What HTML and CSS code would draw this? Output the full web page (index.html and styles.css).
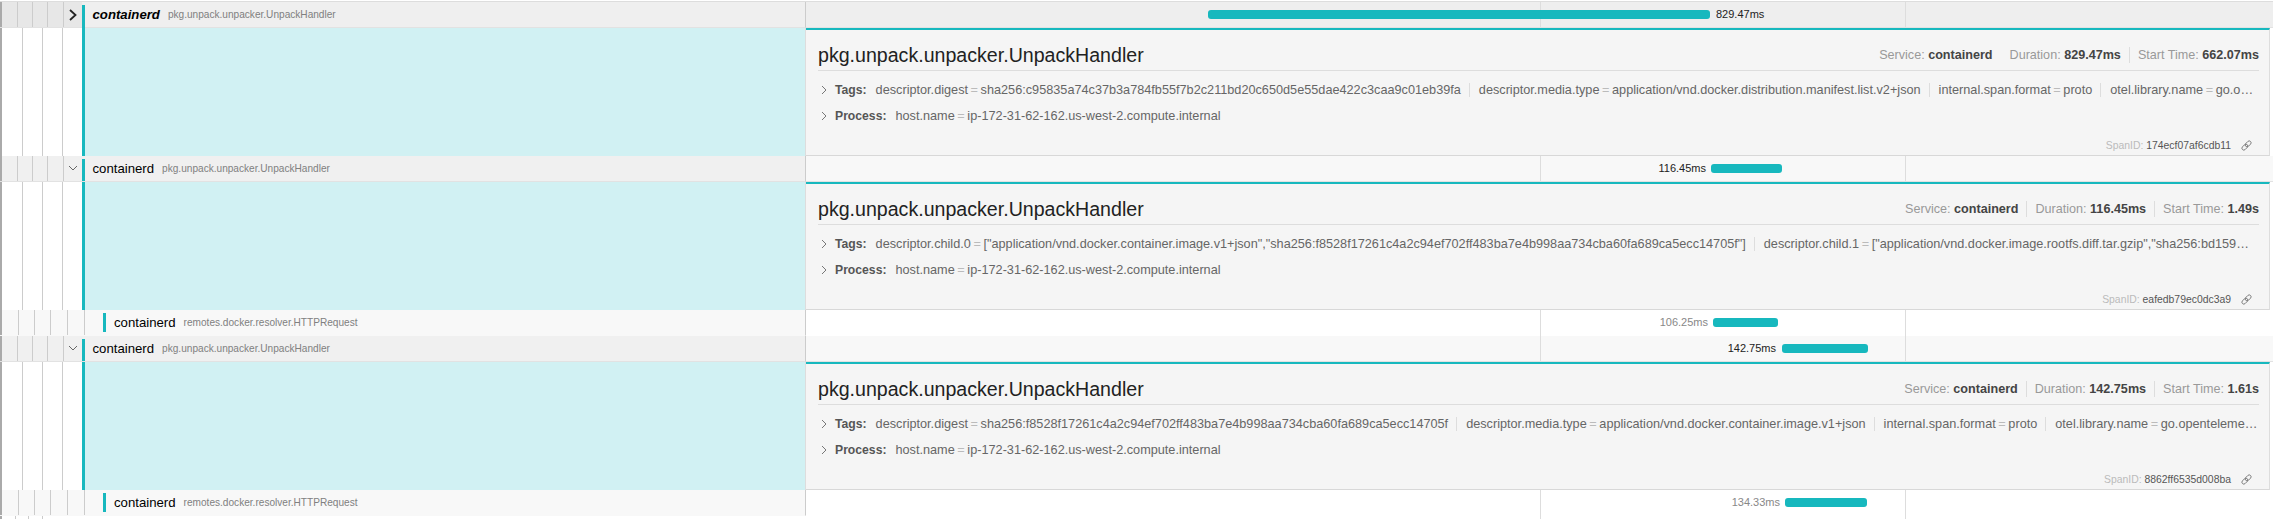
FILE: index.html
```html
<!DOCTYPE html>
<html lang="en">
<head>
<meta charset="utf-8">
<title>Trace timeline</title>
<link rel="stylesheet" href="styles.css">
</head>
<body>
<div class="trace">
  <div class="row row-open row-first">
    <div class="name">
      <div class="guides"><i></i><i></i><i></i><i></i></div>
      <span class="toggle"><svg width="10" height="12" viewBox="0 0 10 12"><path d="M2 1l5.5 5L2 11" fill="none" stroke="#222" stroke-width="1.8"/></svg></span>
      <div class="label"><b class="svc svc-em">containerd</b><span class="op">pkg.unpack.unpacker.UnpackHandler</span></div>
    </div>
    <div class="timeline"><i class="tick t1"></i><i class="tick t2"></i><div class="bar" style="left:402px;width:502px"></div><span class="dur" style="left:910px">829.47ms</span></div>
  </div>
  <div class="detail-row">
    <div class="fill"><div class="guides"><i></i><i></i><i></i><i></i></div><div class="tint"></div></div>
    <div class="detail">
      <div class="head"><h2>pkg.unpack.unpacker.UnpackHandler</h2><div class="meta"><span class="m m-nosep">Service: <b>containerd</b></span><span class="m">Duration: <b>829.47ms</b></span><span class="m">Start Time: <b>662.07ms</b></span></div></div>
      <div class="kv"><svg class="chev" width="6" height="10" viewBox="0 0 6 10"><path d="M1 1l4 4-4 4" fill="none" stroke="#777"/></svg><b>Tags:</b><div class="pairs"><span class="p">descriptor.digest<s>=</s>sha256:c95835a74c37b3a784fb55f7b2c211bd20c650d5e55dae422c3caa9c01eb39fa</span><span class="p">descriptor.media.type<s>=</s>application/vnd.docker.distribution.manifest.list.v2+json</span><span class="p">internal.span.format<s>=</s>proto</span><span class="p">otel.library.name<s>=</s>go.o…</span></div></div>
      <div class="kv"><svg class="chev" width="6" height="10" viewBox="0 0 6 10"><path d="M1 1l4 4-4 4" fill="none" stroke="#777"/></svg><b>Process:</b><div class="pairs"><span class="p">host.name<s>=</s>ip-172-31-62-162.us-west-2.compute.internal</span></div></div>
      <div class="span-id">SpanID: <em>174ecf07af6cdb11</em><svg width="13" height="13" viewBox="0 0 13 13"><g transform="rotate(-45 6.5 6.5)" fill="none" stroke="#777" stroke-width=".9"><rect x=".8" y="4.6" width="6.8" height="3.8" rx="1.9"/><rect x="5.4" y="4.6" width="6.8" height="3.8" rx="1.9"/></g></svg></div>
    </div>
  </div>

  <div class="row">
    <div class="name">
      <div class="guides"><i></i><i></i><i></i><i></i></div>
      <span class="toggle"><svg width="10" height="7" viewBox="0 0 10 7"><path d="M1 1l4 4 4-4" fill="none" stroke="#666" stroke-width="1"/></svg></span>
      <div class="label"><span class="svc">containerd</span><span class="op">pkg.unpack.unpacker.UnpackHandler</span></div>
    </div>
    <div class="timeline"><i class="tick t1"></i><i class="tick t2"></i><span class="dur dur-l" style="right:567px">116.45ms</span><div class="bar" style="left:905px;width:71px"></div></div>
  </div>
  <div class="detail-row">
    <div class="fill"><div class="guides"><i></i><i></i><i></i><i></i></div><div class="tint"></div></div>
    <div class="detail">
      <div class="head"><h2>pkg.unpack.unpacker.UnpackHandler</h2><div class="meta"><span class="m">Service: <b>containerd</b></span><span class="m">Duration: <b>116.45ms</b></span><span class="m">Start Time: <b>1.49s</b></span></div></div>
      <div class="kv"><svg class="chev" width="6" height="10" viewBox="0 0 6 10"><path d="M1 1l4 4-4 4" fill="none" stroke="#777"/></svg><b>Tags:</b><div class="pairs"><span class="p">descriptor.child.0<s>=</s>["application/vnd.docker.container.image.v1+json","sha256:f8528f17261c4a2c94ef702ff483ba7e4b998aa734cba60fa689ca5ecc14705f"]</span><span class="p">descriptor.child.1<s>=</s>["application/vnd.docker.image.rootfs.diff.tar.gzip","sha256:bd159…</span></div></div>
      <div class="kv"><svg class="chev" width="6" height="10" viewBox="0 0 6 10"><path d="M1 1l4 4-4 4" fill="none" stroke="#777"/></svg><b>Process:</b><div class="pairs"><span class="p">host.name<s>=</s>ip-172-31-62-162.us-west-2.compute.internal</span></div></div>
      <div class="span-id">SpanID: <em>eafedb79ec0dc3a9</em><svg width="13" height="13" viewBox="0 0 13 13"><g transform="rotate(-45 6.5 6.5)" fill="none" stroke="#777" stroke-width=".9"><rect x=".8" y="4.6" width="6.8" height="3.8" rx="1.9"/><rect x="5.4" y="4.6" width="6.8" height="3.8" rx="1.9"/></g></svg></div>
    </div>
  </div>

  <div class="row row-child">
    <div class="name">
      <div class="guides"><i></i><i></i><i></i><i></i><i></i></div>
      <div class="label label-child"><span class="svc">containerd</span><span class="op">remotes.docker.resolver.HTTPRequest</span></div>
    </div>
    <div class="timeline"><i class="tick t1"></i><i class="tick t2"></i><span class="dur dur-l dur-dim" style="right:565px">106.25ms</span><div class="bar" style="left:907px;width:65px"></div></div>
  </div>

  <div class="row">
    <div class="name">
      <div class="guides"><i></i><i></i><i></i><i></i></div>
      <span class="toggle"><svg width="10" height="7" viewBox="0 0 10 7"><path d="M1 1l4 4 4-4" fill="none" stroke="#666" stroke-width="1"/></svg></span>
      <div class="label"><span class="svc">containerd</span><span class="op">pkg.unpack.unpacker.UnpackHandler</span></div>
    </div>
    <div class="timeline"><i class="tick t1"></i><i class="tick t2"></i><span class="dur dur-l" style="right:497px">142.75ms</span><div class="bar" style="left:976px;width:86px"></div></div>
  </div>
  <div class="detail-row">
    <div class="fill"><div class="guides"><i></i><i></i><i></i><i></i></div><div class="tint"></div></div>
    <div class="detail">
      <div class="head"><h2>pkg.unpack.unpacker.UnpackHandler</h2><div class="meta"><span class="m">Service: <b>containerd</b></span><span class="m">Duration: <b>142.75ms</b></span><span class="m">Start Time: <b>1.61s</b></span></div></div>
      <div class="kv"><svg class="chev" width="6" height="10" viewBox="0 0 6 10"><path d="M1 1l4 4-4 4" fill="none" stroke="#777"/></svg><b>Tags:</b><div class="pairs"><span class="p">descriptor.digest<s>=</s>sha256:f8528f17261c4a2c94ef702ff483ba7e4b998aa734cba60fa689ca5ecc14705f</span><span class="p">descriptor.media.type<s>=</s>application/vnd.docker.container.image.v1+json</span><span class="p">internal.span.format<s>=</s>proto</span><span class="p">otel.library.name<s>=</s>go.openteleme…</span></div></div>
      <div class="kv"><svg class="chev" width="6" height="10" viewBox="0 0 6 10"><path d="M1 1l4 4-4 4" fill="none" stroke="#777"/></svg><b>Process:</b><div class="pairs"><span class="p">host.name<s>=</s>ip-172-31-62-162.us-west-2.compute.internal</span></div></div>
      <div class="span-id">SpanID: <em>8862ff6535d008ba</em><svg width="13" height="13" viewBox="0 0 13 13"><g transform="rotate(-45 6.5 6.5)" fill="none" stroke="#777" stroke-width=".9"><rect x=".8" y="4.6" width="6.8" height="3.8" rx="1.9"/><rect x="5.4" y="4.6" width="6.8" height="3.8" rx="1.9"/></g></svg></div>
    </div>
  </div>

  <div class="row row-child">
    <div class="name">
      <div class="guides"><i></i><i></i><i></i><i></i><i></i></div>
      <div class="label label-child"><span class="svc">containerd</span><span class="op">remotes.docker.resolver.HTTPRequest</span></div>
    </div>
    <div class="timeline"><i class="tick t1"></i><i class="tick t2"></i><span class="dur dur-l dur-dim" style="right:493px">134.33ms</span><div class="bar" style="left:979px;width:82px"></div></div>
  </div>
  <div class="row row-tail">
    <div class="name"><div class="guides"><i></i><i></i><i></i></div></div>
    <div class="timeline"><i class="tick t1"></i><i class="tick t2"></i></div>
  </div>
</div>
</body>
</html>
```
FILE: styles.css
```css
* { box-sizing: border-box; }
html, body { margin: 0; height: 519px; overflow: hidden; background: #fff; }
body { font-family: "Liberation Sans", Arial, sans-serif; color: #222; }
.trace { padding-top: 2px; }

.row { display: flex; height: 26px; background: #f8f8f8; }
.row-first { background: #eee; border-top: 1px solid #ddd; margin-top: -1px; height: 27px; }
.row-child { background: #fff; }
.row-tail { height: 3px; background: #fff; }

.name { position: relative; width: 806px; flex: none; display: flex; align-items: stretch; background: #f0f0f0; border-bottom: 1px solid #e2e2e2; border-right: 1px solid #ccc; }
.row-first .name { background: #efefef; }
.row-child .name { background: #f8f8f8; border-bottom-color: #f8f8f8; }
.row-tail .name { background: #fff; border: 0; }

.guides { display: flex; width: 64px; flex: none; }
.guides i { display: block; width: 21px; border-right: 1px solid #ccc; }
.guides i:first-child { width: 23px; border-left: 2px solid #aaa; }
.guides i:nth-child(2) { width: 20px; }
.guides i:nth-child(3) { width: 21px; }
.guides i:nth-child(4) { width: 21px; }
.row-first .guides { background: #e7e7e7; }
.row-child .guides { width: 85px; }
.row-tail .guides { width: 43px; }

.toggle { width: 18px; flex: none; display: flex; align-items: center; justify-content: center; }
.row-first .toggle { background: #e7e7e7; }

.label { flex: 1; display: flex; align-items: center; gap: 8px; border-left: 3px solid #17b8be; margin: 3px 0 0; padding: 0 0 3px 7.5px; min-width: 0; }
.row-first .label { margin-bottom: -1px; }
.label-child { flex: none; margin: 3px 0 3px 18px; padding: 0 0 0 8px; height: 19px; }
.svc { font-size: 13.2px; color: #000; line-height: 16px; }
.svc-em { font-style: italic; font-weight: 700; }
.op { font-size: 10.1px; color: #808080; line-height: 16px; }

.timeline { position: relative; flex: 1; border-bottom: 1px solid #e2e2e2; }
.row-child .timeline { border-bottom: 0; }
.row-tail .timeline { border: 0; }
.tick { position: absolute; top: 0; bottom: 0; width: 1px; background: #ddd; }
.t1 { left: 734px; }
.t2 { left: 1099px; }
.bar { position: absolute; top: 8px; height: 9px; background: #17b8be; border-radius: 3px; }
.dur { position: absolute; top: 5px; font-size: 11px; line-height: 15px; color: #222; white-space: nowrap; }
.dur-dim { color: #888; }
.row-first .dur { top: 5px; }

.detail-row { display: flex; height: 128px; }
.fill { width: 806px; flex: none; display: flex; border-right: 1px solid #ddd; }
.fill .guides { width: 82px; }
.fill .guides i:last-child { border-right: 0; }
.fill .guides i:nth-child(4) { width: 19px; }
.tint { flex: 1; background: #d1f1f3; border-left: 3px solid #17b8be; }

.detail { width: 1464px; flex: none; position: relative; background: #f5f5f5; border-top: 2px solid #17b8be; border-bottom: 1px solid #d8d8d8; border-right: 1px solid #ddd; padding: 0 10px 0 12px; }
.head { display: flex; justify-content: space-between; align-items: center; padding-top: 10px; border-bottom: 1px solid #ddd; box-sizing: content-box; height: 30px; }
h2 { margin: 0; font-size: 19.6px; font-weight: 400; line-height: 26px; color: #222; }
.meta { display: flex; font-size: 12.6px; color: #999; }
.m { padding: 0 8px; border-right: 1px solid #ddd; line-height: 16px; }
.m:last-child { border: 0; padding-right: 0; }
.m-nosep { border-color: transparent; }
.m b { color: #444; font-weight: 700; }

.kv { display: flex; align-items: center; height: 26px; font-size: 12.7px; color: #666; }
.head + .kv { margin-top: 6px; }
.chev { flex: none; margin: 0 8px 0 3px; }
.kv > b { flex: none; font-size: 12.2px; color: #555; margin-right: 9px; font-weight: 700; }
.pairs { display: block; flex: 1; min-width: 0; white-space: nowrap; }
.p { padding-right: 8px; margin-right: 9px; border-right: 1px solid #ddd; }
.p:last-child { border: 0; padding: 0; margin: 0; }
.p s { text-decoration: none; color: #bbb; margin: 0 2.6px; }

.span-id { position: absolute; right: 16px; bottom: 3px; display: flex; align-items: center; font-size: 10.4px; color: #bbb; white-space: pre; }
.span-id em { font-style: normal; color: #555; margin-right: 9px; }
```
